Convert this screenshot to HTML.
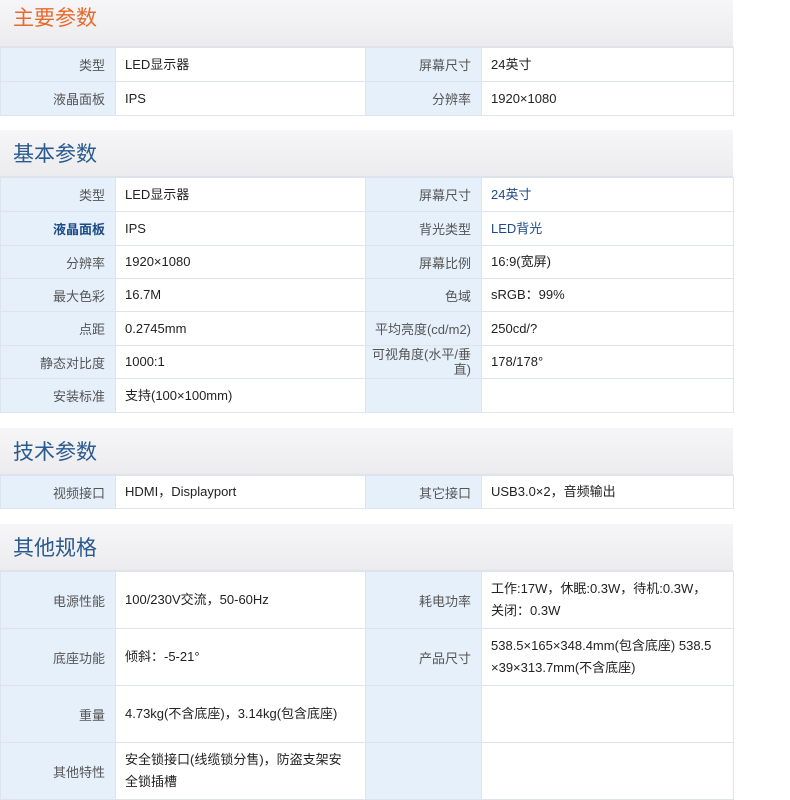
<!DOCTYPE html><html><head><meta charset="utf-8"><style>
body{margin:0;width:790px;height:790px;overflow:hidden;background:#fff;font-family:"Liberation Sans","Noto Sans CJK SC",sans-serif;}
.h{position:absolute;left:0;width:733px;height:46px;background:linear-gradient(#f6f6f8,#ececef);border-bottom:1px solid #dde3ea;}
.h span{position:absolute;left:13px;top:8px;font-size:21px;color:#2a5a8f;}
table{position:absolute;left:0;width:734px;border-collapse:collapse;table-layout:fixed;font-size:13px;}
td{border:1px solid #dde4ec;padding:0 8px;color:#222;}
td.l{background:#e6f0fb;text-align:right;color:#555;padding-right:10px;}
td.v{padding-left:9px;line-height:22px;}
.b{color:#1d4a85!important;font-weight:bold;}
.bl{color:#1d4a85!important;}
</style></head><body>
<div class="h" style="top:0"><span style="color:#e86a2a;top:2px">主要参数</span></div>
<table style="top:47px"><col style="width:115px"><col style="width:250px"><col style="width:116px"><col>
<tr style="height:34px"><td class="l">类型</td><td class="v">LED显示器</td><td class="l">屏幕尺寸</td><td class="v">24英寸</td></tr>
<tr style="height:34px"><td class="l">液晶面板</td><td class="v">IPS</td><td class="l">分辨率</td><td class="v">1920×1080</td></tr></table>
<div class="h" style="top:130px"><span>基本参数</span></div>
<table style="top:177px"><col style="width:115px"><col style="width:250px"><col style="width:116px"><col>
<tr style="height:34px"><td class="l">类型</td><td class="v">LED显示器</td><td class="l">屏幕尺寸</td><td class="v bl">24英寸</td></tr>
<tr style="height:34px"><td class="l b">液晶面板</td><td class="v">IPS</td><td class="l">背光类型</td><td class="v bl">LED背光</td></tr>
<tr style="height:33px"><td class="l">分辨率</td><td class="v">1920×1080</td><td class="l">屏幕比例</td><td class="v">16:9(宽屏)</td></tr>
<tr style="height:33px"><td class="l">最大色彩</td><td class="v">16.7M</td><td class="l">色域</td><td class="v">sRGB：99%</td></tr>
<tr style="height:34px"><td class="l">点距</td><td class="v">0.2745mm</td><td class="l">平均亮度(cd/m2)</td><td class="v">250cd/?</td></tr>
<tr style="height:33px"><td class="l">静态对比度</td><td class="v">1000:1</td><td class="l" style="line-height:15px;white-space:nowrap;padding:0 10px 0 0">可视角度(水平/垂<br>直)</td><td class="v">178/178°</td></tr>
<tr style="height:34px"><td class="l">安装标准</td><td class="v">支持(100×100mm)</td><td class="l"></td><td class="v"></td></tr></table>
<div class="h" style="top:428px"><span>技术参数</span></div>
<table style="top:475px"><col style="width:115px"><col style="width:250px"><col style="width:116px"><col>
<tr style="height:33px"><td class="l">视频接口</td><td class="v">HDMI，Displayport</td><td class="l">其它接口</td><td class="v">USB3.0×2，音频输出</td></tr></table>
<div class="h" style="top:524px"><span>其他规格</span></div>
<table style="top:571px"><col style="width:115px"><col style="width:250px"><col style="width:116px"><col>
<tr style="height:57px"><td class="l">电源性能</td><td class="v">100/230V交流，50-60Hz</td><td class="l">耗电功率</td><td class="v">工作:17W，休眠:0.3W，待机:0.3W，<br>关闭：0.3W</td></tr>
<tr style="height:57px"><td class="l">底座功能</td><td class="v">倾斜：-5-21°</td><td class="l">产品尺寸</td><td class="v">538.5×165×348.4mm(包含底座) 538.5<br>×39×313.7mm(不含底座)</td></tr>
<tr style="height:57px"><td class="l">重量</td><td class="v">4.73kg(不含底座)，3.14kg(包含底座)</td><td class="l"></td><td class="v"></td></tr>
<tr style="height:57px"><td class="l">其他特性</td><td class="v">安全锁接口(线缆锁分售)，防盗支架安<br>全锁插槽</td><td class="l"></td><td class="v"></td></tr></table>
</body></html>
